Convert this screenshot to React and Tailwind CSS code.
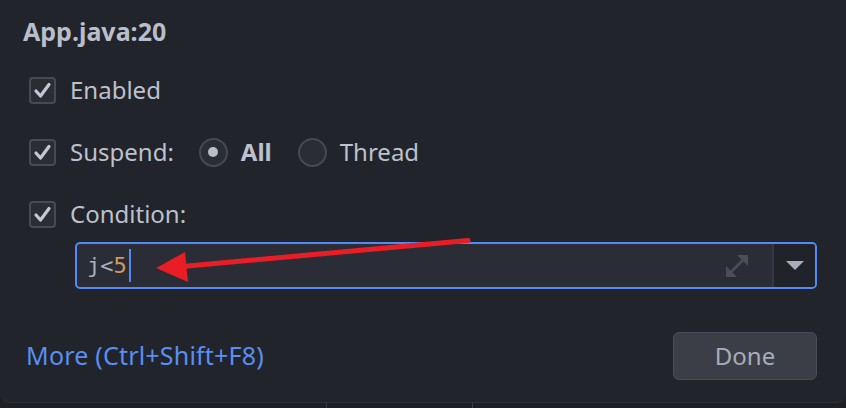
import React from 'react';

const Check = () => (
    <div className="w-[27px] h-[27px] rounded-[4px] border-2 border-[#464a53] bg-[#2a2d34] flex items-center justify-center shrink-0">
        <svg width="19" height="19" viewBox="0 0 19 19">
            <path d="M3 10 L7.5 15 L16 3.5" fill="none" stroke="#c3c8d1" strokeWidth="3.2" strokeLinecap="round" strokeLinejoin="round" />
        </svg>
    </div>
);

const Radio = ({ on }) => (
    <div className="w-[29px] h-[29px] rounded-full border-2 border-[#464a53] bg-[#2a2d34] flex items-center justify-center shrink-0">
        {on && <div className="w-[10px] h-[10px] rounded-full bg-[#b9bfca]" />}
    </div>
);

const App = () => {
    return (
        <div className="w-[846px] h-[408px] bg-[#1d1f24] overflow-hidden relative" style={{ fontFamily: '"Noto Sans", "Open Sans", sans-serif' }}>
            <div className="h-[403px] bg-[#21242b] rounded-b-[9px] border-b border-[#2d3036] flex flex-col px-[23px] text-[#bcc1cc] text-[24px]">
                <div className="mt-[18px] h-[26px] leading-[26px] font-bold text-[#b9bfca] text-[25px]">App.java:20</div>

                <div className="mt-[31px] h-[30px] flex items-center pl-[6px]">
                    <Check />
                    <span className="ml-[14px]">Enabled</span>
                </div>

                <div className="mt-[32px] h-[30px] flex items-center pl-[6px]">
                    <Check />
                    <span className="ml-[14px]">Suspend:</span>
                    <div className="ml-[25px]"><Radio on /></div>
                    <span className="ml-[13px] font-bold">All</span>
                    <div className="ml-[26px]"><Radio /></div>
                    <span className="ml-[13px]">Thread</span>
                </div>

                <div className="mt-[32px] h-[30px] flex items-center pl-[6px]">
                    <Check />
                    <span className="ml-[14px]">Condition:</span>
                </div>

                <div className="mt-[13px] ml-[52px] mr-[6px] h-[47px] rounded-[5px] border-2 border-[#548af7] bg-[#2a2d35] flex overflow-hidden">
                    <div className="flex-1 flex items-center pl-[10px] relative">
                        <span className="text-[22px] text-[#a9b1bd]" style={{ fontFamily: '"DejaVu Sans Mono", "Liberation Mono", monospace' }}>
                            j&lt;<span className="text-[#d29a63]">5</span>
                        </span>
                        <div className="w-[2px] h-[33px] bg-[#548af7] ml-[2px]" />
                        <svg className="ml-auto mr-[22px]" width="26" height="26" viewBox="0 0 26 26">
                            <line x1="5" y1="21" x2="21" y2="5" stroke="#4a4e56" strokeWidth="2.5" />
                            <polygon points="13,2 24,2 24,13" fill="#4a4e56" />
                            <polygon points="2,13 2,24 13,24" fill="#4a4e56" />
                        </svg>
                    </div>
                    <div className="w-[43px] border-l-2 border-[#363940] bg-[#202329] flex items-center justify-center">
                        <svg width="18" height="9" viewBox="0 0 18 9">
                            <polygon points="0,0 18,0 9,9" fill="#a9aeb8" />
                        </svg>
                    </div>
                </div>

                <div className="mt-[43px] flex items-center justify-between mr-[6px]">
                    <span className="ml-[3px] text-[25px] text-[#5a8ef2] tracking-[0.2px]">More (Ctrl+Shift+F8)</span>
                    <button className="w-[144px] h-[48px] rounded-[6px] border border-[#4a4d55] bg-[#3b3e46] text-[#a6adb8]">Done</button>
                </div>
            </div>
            <div className="h-[5px] flex">
                <div className="w-[326px]" />
                <div className="w-[147px] border-l border-r border-[#3c3e44]" />
            </div>

            <svg className="absolute left-0 top-0 pointer-events-none" width="846" height="408">
                <line x1="468" y1="240.5" x2="182" y2="266.5" stroke="#e81d25" strokeWidth="5" strokeLinecap="round" />
                <polygon points="156,268 185,252 188,282" fill="#e81d25" />
            </svg>
        </div>
    );
};

export default App;
